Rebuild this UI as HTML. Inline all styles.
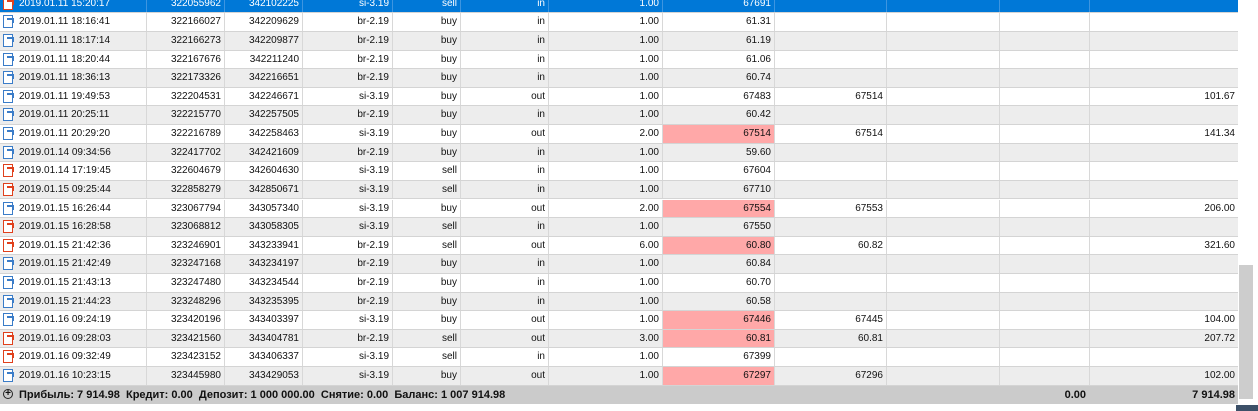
<!DOCTYPE html>
<html><head><meta charset="utf-8"><style>
body{margin:0;width:1258px;height:411px;overflow:hidden;background:#fff;font-family:"Liberation Sans",sans-serif;font-size:10px;color:#111;position:relative}
.r{position:absolute;left:0;width:1238px;height:18.62px;border-bottom:1px solid #d4d4d4;box-sizing:border-box}
.w{background:#fff}.g{background:#ededed}
.s{background:#0078d7;color:#fff}
.r span{position:absolute;top:0;height:100%;line-height:17px;border-right:1px solid #d8d8d8;box-sizing:border-box;text-align:right;padding-right:3px;white-space:nowrap}
.s span{border-right-color:#3d95e0}
.r span:nth-child(1){left:0;width:147px;text-align:left;padding-left:19px}
.r span:nth-child(2){left:147px;width:78px}
.r span:nth-child(3){left:225px;width:78px}
.r span:nth-child(4){left:303px;width:90px}
.r span:nth-child(5){left:393px;width:68px}
.r span:nth-child(6){left:461px;width:88px}
.r span:nth-child(7){left:549px;width:114px}
.r span:nth-child(8){left:663px;width:112px}
.r span:nth-child(9){left:775px;width:112px}
.r span:nth-child(10){left:887px;width:113px}
.r span:nth-child(11){left:1000px;width:90px}
.r span:nth-child(12){left:1090px;width:148px;border-right:none}
.p{background:#ffa8a8}
i{position:absolute;left:3px;top:2px;width:10px;height:13px;border:1px solid #3a7cc8;box-sizing:border-box;background:#fff}
i.red{border-color:#e0401c}
i::after{content:"";position:absolute;right:-2px;top:2px;width:5px;height:3px;border-top:2px solid #3a7cc8;border-right:2px solid #3a7cc8}
i.red::after{border-color:#e0401c}
.sum{position:absolute;left:0;top:386px;width:1238px;height:18px;background:#cbcbcb;font-weight:bold;line-height:18px;font-size:11px}
.sb{position:absolute;left:1239px;top:265px;width:14px;height:134px;background:#cdcdcd}
</style></head><body>
<div class="r s" style="top:-5.3px"><span><i class="red"></i>2019.01.11 15:20:17</span><span>322055962</span><span>342102225</span><span>si-3.19</span><span>sell</span><span>in</span><span>1.00</span><span>67691</span><span></span><span></span><span></span><span></span></div>
<div class="r w" style="top:13.3px"><span><i></i>2019.01.11 18:16:41</span><span>322166027</span><span>342209629</span><span>br-2.19</span><span>buy</span><span>in</span><span>1.00</span><span>61.31</span><span></span><span></span><span></span><span></span></div>
<div class="r g" style="top:31.92px"><span><i></i>2019.01.11 18:17:14</span><span>322166273</span><span>342209877</span><span>br-2.19</span><span>buy</span><span>in</span><span>1.00</span><span>61.19</span><span></span><span></span><span></span><span></span></div>
<div class="r w" style="top:50.54px"><span><i></i>2019.01.11 18:20:44</span><span>322167676</span><span>342211240</span><span>br-2.19</span><span>buy</span><span>in</span><span>1.00</span><span>61.06</span><span></span><span></span><span></span><span></span></div>
<div class="r g" style="top:69.16px"><span><i></i>2019.01.11 18:36:13</span><span>322173326</span><span>342216651</span><span>br-2.19</span><span>buy</span><span>in</span><span>1.00</span><span>60.74</span><span></span><span></span><span></span><span></span></div>
<div class="r w" style="top:87.78px"><span><i></i>2019.01.11 19:49:53</span><span>322204531</span><span>342246671</span><span>si-3.19</span><span>buy</span><span>out</span><span>1.00</span><span>67483</span><span>67514</span><span></span><span></span><span>101.67</span></div>
<div class="r g" style="top:106.4px"><span><i></i>2019.01.11 20:25:11</span><span>322215770</span><span>342257505</span><span>br-2.19</span><span>buy</span><span>in</span><span>1.00</span><span>60.42</span><span></span><span></span><span></span><span></span></div>
<div class="r w" style="top:125.02px"><span><i></i>2019.01.11 20:29:20</span><span>322216789</span><span>342258463</span><span>si-3.19</span><span>buy</span><span>out</span><span>2.00</span><span class="p">67514</span><span>67514</span><span></span><span></span><span>141.34</span></div>
<div class="r g" style="top:143.64px"><span><i></i>2019.01.14 09:34:56</span><span>322417702</span><span>342421609</span><span>br-2.19</span><span>buy</span><span>in</span><span>1.00</span><span>59.60</span><span></span><span></span><span></span><span></span></div>
<div class="r w" style="top:162.26px"><span><i class="red"></i>2019.01.14 17:19:45</span><span>322604679</span><span>342604630</span><span>si-3.19</span><span>sell</span><span>in</span><span>1.00</span><span>67604</span><span></span><span></span><span></span><span></span></div>
<div class="r g" style="top:180.88px"><span><i class="red"></i>2019.01.15 09:25:44</span><span>322858279</span><span>342850671</span><span>si-3.19</span><span>sell</span><span>in</span><span>1.00</span><span>67710</span><span></span><span></span><span></span><span></span></div>
<div class="r w" style="top:199.5px"><span><i></i>2019.01.15 16:26:44</span><span>323067794</span><span>343057340</span><span>si-3.19</span><span>buy</span><span>out</span><span>2.00</span><span class="p">67554</span><span>67553</span><span></span><span></span><span>206.00</span></div>
<div class="r g" style="top:218.12px"><span><i class="red"></i>2019.01.15 16:28:58</span><span>323068812</span><span>343058305</span><span>si-3.19</span><span>sell</span><span>in</span><span>1.00</span><span>67550</span><span></span><span></span><span></span><span></span></div>
<div class="r w" style="top:236.74px"><span><i class="red"></i>2019.01.15 21:42:36</span><span>323246901</span><span>343233941</span><span>br-2.19</span><span>sell</span><span>out</span><span>6.00</span><span class="p">60.80</span><span>60.82</span><span></span><span></span><span>321.60</span></div>
<div class="r g" style="top:255.36px"><span><i></i>2019.01.15 21:42:49</span><span>323247168</span><span>343234197</span><span>br-2.19</span><span>buy</span><span>in</span><span>1.00</span><span>60.84</span><span></span><span></span><span></span><span></span></div>
<div class="r w" style="top:273.98px"><span><i></i>2019.01.15 21:43:13</span><span>323247480</span><span>343234544</span><span>br-2.19</span><span>buy</span><span>in</span><span>1.00</span><span>60.70</span><span></span><span></span><span></span><span></span></div>
<div class="r g" style="top:292.6px"><span><i></i>2019.01.15 21:44:23</span><span>323248296</span><span>343235395</span><span>br-2.19</span><span>buy</span><span>in</span><span>1.00</span><span>60.58</span><span></span><span></span><span></span><span></span></div>
<div class="r w" style="top:311.22px"><span><i></i>2019.01.16 09:24:19</span><span>323420196</span><span>343403397</span><span>si-3.19</span><span>buy</span><span>out</span><span>1.00</span><span class="p">67446</span><span>67445</span><span></span><span></span><span>104.00</span></div>
<div class="r g" style="top:329.84px"><span><i class="red"></i>2019.01.16 09:28:03</span><span>323421560</span><span>343404781</span><span>br-2.19</span><span>sell</span><span>out</span><span>3.00</span><span class="p">60.81</span><span>60.81</span><span></span><span></span><span>207.72</span></div>
<div class="r w" style="top:348.46px"><span><i class="red"></i>2019.01.16 09:32:49</span><span>323423152</span><span>343406337</span><span>si-3.19</span><span>sell</span><span>in</span><span>1.00</span><span>67399</span><span></span><span></span><span></span><span></span></div>
<div class="r g" style="top:367.08px"><span><i></i>2019.01.16 10:23:15</span><span>323445980</span><span>343429053</span><span>si-3.19</span><span>buy</span><span>out</span><span>1.00</span><span class="p">67297</span><span>67296</span><span></span><span></span><span>102.00</span></div>
<div class="sum">
<span style="position:absolute;left:3px;top:3px;width:10px;height:10px;border:1px solid #222;border-radius:50%;box-sizing:border-box;font-size:10px;line-height:8px;text-align:center;font-weight:bold">+</span>
<span style="position:absolute;left:19px">Прибыль: 7 914.98&nbsp; Кредит: 0.00&nbsp; Депозит: 1 000 000.00&nbsp; Снятие: 0.00&nbsp; Баланс: 1 007 914.98</span>
<span style="position:absolute;right:152px">0.00</span>
<span style="position:absolute;right:3px">7 914.98</span>
</div>
<div class="sb"></div>
<div style="position:absolute;left:1236px;top:405px;width:22px;height:6px;background:#3c5068"></div>
</body></html>
